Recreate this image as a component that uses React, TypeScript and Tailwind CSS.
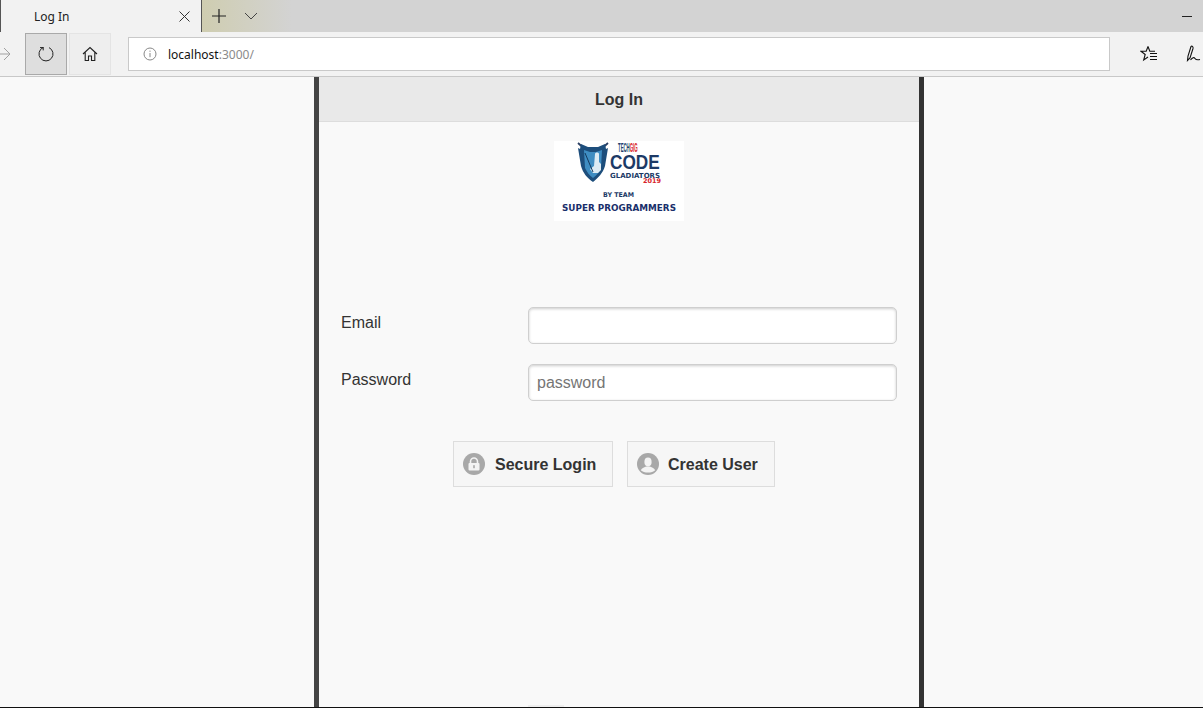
import { useState } from "react";

function Logo() {
  return (
    <svg width="130" height="80" viewBox="0 0 130 80" className="block bg-white" role="img" aria-label="TechGig Code Gladiators 2019">
      {/* crossed swords */}
      <path d="M24 2l9 8M54 2l-9 8" stroke="#2b3f63" strokeWidth="1.8" />
      {/* shield */}
      <path d="M27 3l7 3h10l7-3 1 5 2-1-3 18c-2 7-7 12-12 16-6-4-10-9-12-16l-3-18 2 1z" fill="#1d4e7c" />
      <path d="M30 9l6 2h6l6-2-1 18c-2 4-4 7-8 10-4-3-6-6-8-10z" fill="#3f8dc2" />
      {/* knight */}
      <path d="M41 13c0-2 4-2 4 0v8l2 2v6l-3 3h-5l-3-4 4-3z" fill="#dcebf4" />
      <path d="M31 12l8 19" stroke="#14395e" strokeWidth="1" />
      <text transform="translate(64 10.5) scale(0.36 1)" fontFamily="Liberation Sans, sans-serif" fontWeight="700" fontSize="12" fill="#1d3f6e">
        TECH<tspan fill="#d8232a">GIG</tspan>
      </text>
      <text transform="translate(56 28) scale(0.86 1)" fontFamily="Liberation Sans, sans-serif" fontWeight="700" fontSize="20" fill="#1c3a66">CODE</text>
      <text x="56" y="36.5" textLength="50" lengthAdjust="spacingAndGlyphs" fontFamily="DejaVu Sans, sans-serif" fontWeight="700" fontSize="7" fill="#1c3a66">GLADIATORS</text>
      <text x="89" y="42" textLength="18" lengthAdjust="spacingAndGlyphs" fontFamily="DejaVu Sans, sans-serif" fontWeight="700" fontSize="6.5" fill="#d8232a">2019</text>
      <text x="49" y="55.5" textLength="31" lengthAdjust="spacingAndGlyphs" fontFamily="DejaVu Sans, sans-serif" fontWeight="700" fontSize="6.5" fill="#1c3a66">BY TEAM</text>
      <text x="8" y="69.5" textLength="114" lengthAdjust="spacingAndGlyphs" fontFamily="DejaVu Sans, sans-serif" fontWeight="700" fontSize="9.2" fill="#1a2f6b">SUPER PROGRAMMERS</text>
    </svg>
  );
}

function LockBadge() {
  return (
    <svg width="22" height="22" viewBox="0 0 22 22" className="shrink-0">
      <circle cx="11" cy="11" r="11" fill="#a8a8a8" />
      <path d="M7.5 10V8.5a3.5 3.5 0 0 1 7 0V10" fill="none" stroke="#f3f3f3" strokeWidth="1.6" />
      <rect x="5.5" y="10" width="11" height="7.5" rx="1" fill="#f3f3f3" />
      <rect x="10.2" y="12.2" width="1.6" height="3" fill="#a8a8a8" />
    </svg>
  );
}

function UserBadge() {
  return (
    <svg width="22" height="22" viewBox="0 0 22 22" className="shrink-0">
      <circle cx="11" cy="11" r="11" fill="#a8a8a8" />
      <ellipse cx="11" cy="9" rx="3.6" ry="4.4" fill="#f3f3f3" />
      <path d="M3.8 17.2c1-2.6 4-3 5.4-3.8h3.6c1.4.8 4.4 1.2 5.4 3.8-1.8 1.6-4.2 2.4-7.2 2.4s-5.4-.8-7.2-2.4z" fill="#f3f3f3" />
    </svg>
  );
}

function BrowserChrome() {
  return (
    <header className="shrink-0 font-['Noto_Sans',sans-serif]">
      <div className="flex h-8 bg-[#d3d3d3]">
        <div className="flex w-[202px] shrink-0 items-center border-x border-x-[#555] bg-[#f2f2f2] pl-[33px] pr-[11px]">
          <span className="mt-[2px] flex-1 text-[12px] text-[#222]">Log In</span>
          <svg width="11" height="11" viewBox="0 0 11 11" stroke="#333" strokeWidth="1">
            <path d="M.5.5l10 10M10.5.5l-10 10" />
          </svg>
        </div>
        <div className="flex w-[90px] shrink-0 items-center bg-linear-to-r from-[#cfcdb0] to-[#d3d3d3] pl-[10px]">
          <svg width="14" height="14" viewBox="0 0 14 14" stroke="#222" strokeWidth="1.2">
            <path d="M7 0v14M0 7h14" />
          </svg>
          <svg width="14" height="8" viewBox="0 0 14 8" stroke="#444" strokeWidth="1" fill="none" className="ml-[18px]">
            <path d="M1 1l6 6 6-6" />
          </svg>
        </div>
        <div className="flex flex-1 items-center justify-end pr-[11px]">
          <div className="h-px w-[10px] bg-[#222]" />
        </div>
      </div>
      <div className="flex h-[45px] items-center border-b border-b-[#c8c8c8] bg-[#f2f2f2]">
        <svg width="11" height="14" viewBox="0 0 11 14" stroke="#a0a0a0" strokeWidth="1" fill="none" className="shrink-0">
          <path d="M0 7h10M4 1l6 6-6 6" />
        </svg>
        <button className="ml-[14px] flex size-[42px] shrink-0 items-center justify-center border border-[#a9a9a9] bg-[#dedede]">
          <svg width="16" height="16" viewBox="0 0 16 16" stroke="#222" strokeWidth="1" fill="none">
            <path d="M5 1.6A7 7 0 1 0 11 1.6M5.2 1v3.4" />
            <path d="M2 1.6h3.2" />
          </svg>
        </button>
        <button className="ml-[2px] flex size-[42px] shrink-0 items-center justify-center border border-[#e4e4e4] bg-[#eeeeee]">
          <svg width="16" height="16" viewBox="0 0 16 16" stroke="#222" strokeWidth="1.1" fill="none">
            <path d="M1 8l7-6.5L15 8M3.2 6.5V14.5h3.3V10h3v4.5h3.3V6.5" />
          </svg>
        </button>
        <div className="ml-[17px] flex h-[34px] w-[982px] shrink-0 items-center border border-[#c9c9c9] bg-white pl-[14px] text-[12px]">
          <svg width="14" height="14" viewBox="0 0 14 14" fill="none" stroke="#888" className="shrink-0">
            <circle cx="7" cy="7" r="6" />
            <path d="M7 6v4.2M7 3.6v1.2" />
          </svg>
          <span className="ml-[11px] mt-[2px] text-[#111]">localhost</span>
          <span className="mt-[2px] text-[#8a8a8a]">:3000/</span>
        </div>
        <svg width="18" height="18" viewBox="0 0 18 18" fill="none" stroke="#111" strokeWidth="1.1" className="ml-[30px] shrink-0">
          <path d="M8 1.5l1.8 4.8H15M8 1.5L6.2 6.3H1l4.2 3.2L3.7 15l4.3-3" />
          <path d="M10 8.5h7M10 11.5h7M10 14.5h7" />
        </svg>
        <svg width="15" height="18" viewBox="0 0 15 18" fill="none" stroke="#111" strokeWidth="1.1" className="ml-[28px] shrink-0">
          <path d="M5 1.5L2 11l-.5 4.5L4 13l3-9.5c.5-2-1.2-3-2-2z" />
          <path d="M4.5 15c2-2.5 3.5-3 4.5-1.5s2 1.7 5 1" />
        </svg>
      </div>
    </header>
  );
}

export default function App() {
  const [email, setEmail] = useState("");
  const [password, setPassword] = useState("");

  return (
    <div className="flex h-[708px] w-[1203px] flex-col overflow-hidden border-b border-b-[#111] bg-[#f9f9f9] font-['Liberation_Sans',Arial,sans-serif] text-[#333]">
      <BrowserChrome />
      <main className="relative ml-[314px] flex w-[610px] flex-1 flex-col border-l-[5px] border-r-[5px] border-l-[#444] border-r-[#333]">
        <div className="flex h-[45px] shrink-0 items-center justify-center border-b border-b-[#dddddd] bg-[#e9e9e9] pt-[2px] text-base font-bold text-[#333]">
          Log In
        </div>
        <div className="flex justify-center pt-[19px]">
          <Logo />
        </div>
        <form className="mt-[86px] flex flex-col gap-5 px-[22px]" onSubmit={(e) => e.preventDefault()}>
          <div className="flex items-start">
            <label htmlFor="email" className="mt-[6px] w-[187px] shrink-0 text-base leading-[20px]">Email</label>
            <input
              id="email"
              value={email}
              onChange={(e) => setEmail(e.target.value)}
              className="h-[37px] w-[369px] rounded-[5px] border border-[#cfcfcf] bg-white px-2 text-base shadow-[inset_0_1px_3px_rgba(0,0,0,0.2)] outline-none"
            />
          </div>
          <div className="flex items-start">
            <label htmlFor="password" className="mt-[6px] w-[187px] shrink-0 text-base leading-[20px]">Password</label>
            <input
              id="password"
              type="password"
              placeholder="password"
              value={password}
              onChange={(e) => setPassword(e.target.value)}
              className="h-[37px] w-[369px] rounded-[5px] border border-[#cfcfcf] bg-white px-2 text-base shadow-[inset_0_1px_3px_rgba(0,0,0,0.2)] outline-none placeholder:text-[#757575]"
            />
          </div>
          <div className="mt-5 flex justify-center gap-[14px] pr-[10px]">
            <button className="flex h-[46px] w-[160px] items-center gap-[10px] border border-[#dddddd] bg-[#f6f6f6] pl-[9px] text-base font-bold text-[#333]">
              <LockBadge />
              <span className="mt-[2px]">Secure Login</span>
            </button>
            <button className="flex h-[46px] w-[148px] items-center gap-[9px] border border-[#dddddd] bg-[#f6f6f6] pl-[9px] text-base font-bold text-[#333]">
              <UserBadge />
              <span className="mt-[2px]">Create User</span>
            </button>
          </div>
        </form>
        {/* faint scroll handle at the window's bottom edge */}
        <div className="absolute bottom-0 left-[209px] h-[2px] w-[36px] bg-[#eeeeee]" />
      </main>
    </div>
  );
}
